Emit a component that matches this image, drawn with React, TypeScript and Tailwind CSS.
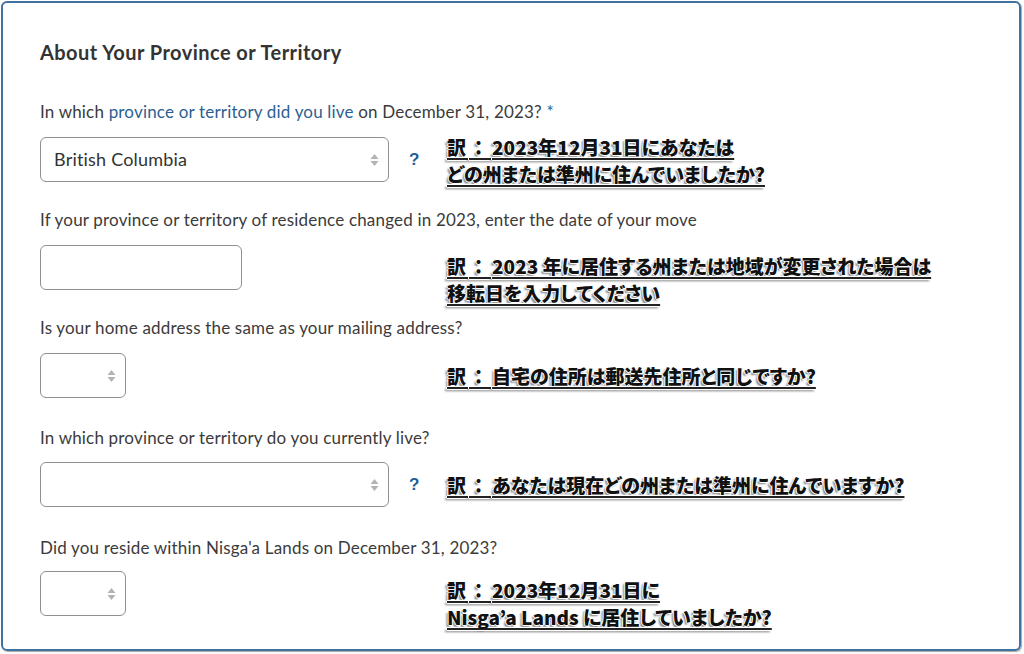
import React from "react";

const ann =
  "font-['Noto_Sans_CJK_JP',sans-serif] font-black text-[19px] leading-[27px] text-[#111] [font-feature-settings:'palt'] [text-shadow:1px_0_0_#fff,-1px_0_0_#fff,0_1px_0_#fff,0_-1px_0_#fff,-2px_2px_2px_rgba(0,0,0,0.5)]";

function Line({ children }: { children: React.ReactNode }) {
  return (
    <div className="whitespace-nowrap">
      <span className="underline decoration-2 underline-offset-[3px] decoration-[#222] [text-decoration-skip-ink:none]">
        {children}
      </span>
    </div>
  );
}

function Ko() {
  return (
    <>
      <span className="tracking-[3px]">訳</span>
      <span className="tracking-[4px] [font-feature-settings:normal]">：</span>
    </>
  );
}

function Arrows() {
  return (
    <svg width="9" height="14" viewBox="0 0 9 14" className="shrink-0">
      <path d="M4.5 1 L8.5 6 L0.5 6 Z" fill="#b3b3b3" />
      <path d="M4.5 13 L8.5 8 L0.5 8 Z" fill="#b3b3b3" />
    </svg>
  );
}

function SelectBox({ wide, value }: { wide?: boolean; value?: string }) {
  return (
    <div
      className={`h-[45px] ${wide ? "w-[349px]" : "w-[86px]"} border border-[#8f8f8f] rounded-[6px] bg-white flex items-center justify-between pl-[13px] pr-[9px] shrink-0`}
    >
      <span className="text-[18px] text-[#333] tracking-[0.2px]">{value ?? ""}</span>
      <Arrows />
    </div>
  );
}

function Q() {
  return <span className="ml-[20px] text-[17px] font-bold text-[#245e98] font-['Liberation_Sans',sans-serif]">?</span>;
}

const label = "text-[17px] leading-[22px] tracking-[0.18px]";

export default function App() {
  return (
    <div className="w-[1024px] h-[654px] bg-white pl-[1px] pt-[1px] font-['Lato',sans-serif]">
      <div className="w-[1020px] h-[650px] border-2 border-[#41719d] rounded-[6px] shadow-[1px_1px_1px_rgba(0,0,0,0.35)] pl-[37px] pt-[37px] text-[#3b3b3b]">
        <h2 className="text-[20px] leading-[24px] font-bold text-[#333] tracking-[0.45px]">About Your Province or Territory</h2>

        {/* Row 1 */}
        <div className={`mt-[37px] ${label}`}>
          In which <span className="text-[#2c5f91]">province or territory did you live</span> on December 31, 2023?{" "}
          <span className="text-[#2c5f91]">*</span>
        </div>
        <div className="mt-[14px] h-[45px] flex items-center">
          <div className="w-[407px] flex items-center">
            <SelectBox wide value="British Columbia" />
            <Q />
          </div>
          <div className={ann}>
            <Line><Ko />2023年12月31日にあなたは</Line>
            <Line>どの州または準州に住んでいましたか?</Line>
          </div>
        </div>

        {/* Row 2 */}
        <div className={`mt-[27px] ${label}`}>
          If your province or territory of residence changed in 2023, enter the date of your move
        </div>
        <div className="mt-[14px] h-[45px] flex items-start">
          <div className="w-[407px] flex items-center">
            <div className="h-[45px] w-[202px] border border-[#8f8f8f] rounded-[6px] bg-white" />
          </div>
          <div className={`${ann} mt-[7px]`}>
            <Line><Ko />2023 年に居住する州または地域が変更された場合は</Line>
            <Line>移転日を入力してください</Line>
          </div>
        </div>

        {/* Row 3 */}
        <div className={`mt-[27px] ${label}`}>Is your home address the same as your mailing address?</div>
        <div className="mt-[14px] h-[45px] flex items-center">
          <div className="w-[407px] flex items-center">
            <SelectBox />
          </div>
          <div className={ann}>
            <Line><Ko />自宅の住所は郵送先住所と同じですか?</Line>
          </div>
        </div>

        {/* Row 4 */}
        <div className={`mt-[29px] ${label}`}>In which province or territory do you currently live?</div>
        <div className="mt-[13px] h-[45px] flex items-center">
          <div className="w-[407px] flex items-center">
            <SelectBox wide />
            <Q />
          </div>
          <div className={ann}>
            <Line><Ko />あなたは現在どの州または準州に住んでいますか?</Line>
          </div>
        </div>

        {/* Row 5 */}
        <div className={`mt-[30px] ${label}`}>Did you reside within Nisga'a Lands on December 31, 2023?</div>
        <div className="mt-[12px] h-[45px] flex items-start">
          <div className="w-[407px] flex items-center">
            <SelectBox />
          </div>
          <div className={`${ann} mt-[5px]`}>
            <Line><Ko />2023年12月31日に</Line>
            <Line>Nisga’a Lands に居住していましたか?</Line>
          </div>
        </div>
      </div>
    </div>
  );
}
